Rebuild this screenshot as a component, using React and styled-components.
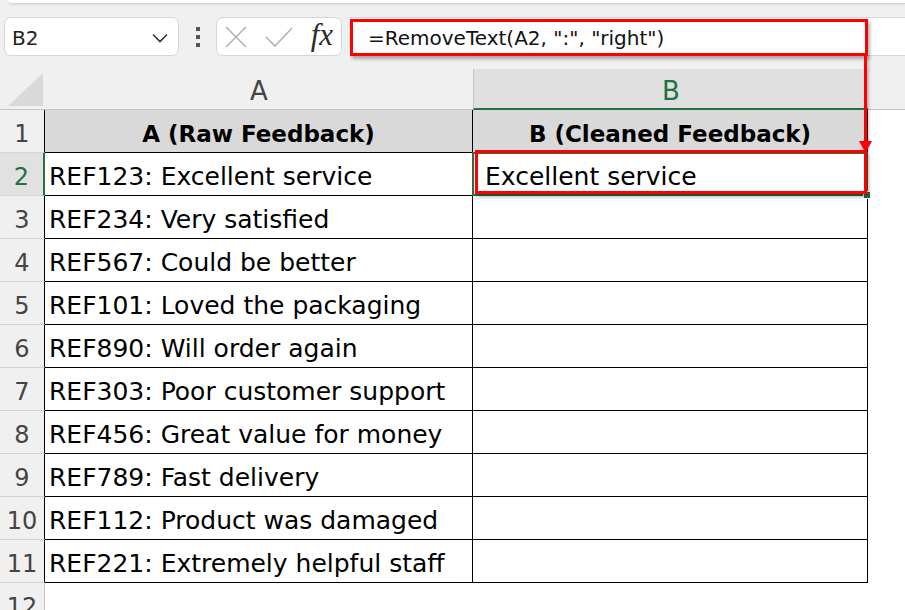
import React from "react";
import styled, { createGlobalStyle } from "styled-components";

const GlobalStyle = createGlobalStyle`
  html, body {
    margin: 0;
    padding: 0;
    background: #ffffff;
  }
  body {
    font-family: "DejaVu Sans", sans-serif;
    overflow: hidden;
  }
`;

const Page = styled.div`
  position: relative;
  width: 905px;
  height: 610px;
  overflow: hidden;
  background: #ffffff;
`;

const Toolbar = styled.div`
  background: #f0f0f0;
  height: 68px;
  display: flex;
  flex-direction: column;
`;

const RibbonEdge = styled.div`
  height: 3px;
  margin-left: 8px;
  background: #ffffff;
  border-bottom: 1px solid #d4d4d4;
  border-bottom-left-radius: 6px;
  box-shadow: 0 1px 3px rgba(0, 0, 0, 0.08);
`;

const FormulaRow = styled.div`
  display: flex;
  align-items: stretch;
  height: 39px;
  margin-top: 13px;
  padding-left: 4px;
`;

const NameBox = styled.div`
  width: 175px;
  box-sizing: border-box;
  background: #ffffff;
  border: 1px solid #d6d6d6;
  border-radius: 7px;
  display: flex;
  align-items: center;
  justify-content: space-between;
  padding: 2px 10px 0 7px;
  font-size: 20px;
  color: #222;
`;

const DotsSlot = styled.div`
  width: 37px;
  display: flex;
  align-items: center;
  justify-content: center;
`;

const FxBox = styled.div`
  width: 126px;
  box-sizing: border-box;
  background: #ffffff;
  border: 1px solid #d6d6d6;
  border-radius: 7px;
  display: flex;
  align-items: center;
  justify-content: space-between;
  padding: 0 8px;
`;

const FxLabel = styled.span`
  font-family: "Liberation Serif", "DejaVu Serif", serif;
  font-style: italic;
  font-size: 31px;
  color: #2a2a2a;
  line-height: 1;
  margin-top: -4px;
`;

const FormulaInput = styled.div`
  flex: 1;
  margin-left: 8px;
  background: #ffffff;
  border-top: 1px solid #d6d6d6;
  border-bottom: 1px solid #d6d6d6;
  display: flex;
  align-items: center;
  padding: 3px 0 0 18px;
  font-size: 20px;
  color: #111;
  white-space: nowrap;
`;

const gridCols = "45px 428px 395px 1fr";

const HeaderRow = styled.div`
  display: grid;
  grid-template-columns: ${gridCols};
  height: 42px;
  background: #f0f0f0;
`;

const Corner = styled.div`
  position: relative;
  border-bottom: 1px solid #c6c6c6;
  &::after {
    content: "";
    position: absolute;
    left: 8px;
    right: 2px;
    top: 5px;
    bottom: 3px;
    background: #d9d9d9;
    clip-path: polygon(100% 0, 100% 100%, 0 100%);
  }
`;

const ColHead = styled.div`
  box-sizing: border-box;
  display: flex;
  align-items: center;
  justify-content: center;
  padding-top: 4px;
  font-size: 26px;
  color: ${(p) => (p.$active ? "#217346" : "#444")};
  background: ${(p) => (p.$active ? "#e0e0e0" : "#f0f0f0")};
  border-left: ${(p) => (p.$active ? "1px solid #c6c6c6" : "none")};
  border-bottom: ${(p) => (p.$active ? "2px solid #217346" : "1px solid #c6c6c6")};
  margin-top: ${(p) => (p.$active ? "1px" : "0")};
`;

const RowLine = styled.div`
  display: grid;
  grid-template-columns: ${gridCols};
  height: 43px;
`;

const RowHead = styled.div`
  box-sizing: border-box;
  display: flex;
  align-items: center;
  justify-content: center;
  padding-top: 5px;
  font-size: 24px;
  background: ${(p) => (p.$active ? "#e1e1e1" : "#f0f0f0")};
  color: ${(p) => (p.$active ? "#217346" : "#444")};
  border-bottom: 1px solid #d4d4d4;
  border-right: ${(p) =>
    p.$active ? "2px solid #217346" : p.$inTable ? "1px solid #000" : "1px solid #c6c6c6"};
`;

const Cell = styled.div`
  box-sizing: border-box;
  display: flex;
  align-items: center;
  justify-content: ${(p) => (p.$head ? "center" : "flex-start")};
  padding: 5px ${(p) => p.$pad}px 0;
  font-size: ${(p) => (p.$head ? "23px" : "25px")};
  font-weight: ${(p) => (p.$head ? 700 : 400)};
  background: ${(p) => (p.$head ? "#d9d9d9" : "#ffffff")};
  color: #000;
  white-space: nowrap;
  overflow: hidden;
  border-right: 1px solid #000;
  border-bottom: 1px solid #000;
`;

const Filler = styled.div`
  background: #ffffff;
`;

const Selection = styled.div`
  position: absolute;
  left: 472px;
  top: 152px;
  width: 396px;
  height: 44px;
  box-sizing: border-box;
  border: 2px solid #2d6b45;
  &::after {
    content: "";
    position: absolute;
    right: -5px;
    bottom: -5px;
    width: 6px;
    height: 6px;
    background: #2d6b45;
    border: 1px solid #ffffff;
  }
`;

const RedBox = styled.div`
  position: absolute;
  box-sizing: border-box;
  border: 3px solid #ff0000;
  box-shadow: 2px 3px 3px rgba(0, 0, 0, 0.3);
  pointer-events: none;
`;

const RedLine = styled.div`
  position: absolute;
  left: 864px;
  top: 55px;
  width: 3px;
  height: 88px;
  background: #ff0000;
  box-shadow: 2px 2px 3px rgba(0, 0, 0, 0.25);
`;

const ArrowHead = styled.svg`
  position: absolute;
  left: 858px;
  top: 140px;
`;

const rows = [
  "REF123: Excellent service",
  "REF234: Very satisfied",
  "REF567: Could be better",
  "REF101: Loved the packaging",
  "REF890: Will order again",
  "REF303: Poor customer support",
  "REF456: Great value for money",
  "REF789: Fast delivery",
  "REF112: Product was damaged",
  "REF221: Extremely helpful staff",
];

const Dots = () => (
  <svg width="6" height="22" viewBox="0 0 6 22">
    <rect x="1" y="1" width="4" height="4" fill="#555" />
    <rect x="1" y="9" width="4" height="4" fill="#555" />
    <rect x="1" y="17" width="4" height="4" fill="#555" />
  </svg>
);

const Chevron = () => (
  <svg width="16" height="10" viewBox="0 0 16 10">
    <polyline points="1,1.5 8,8.5 15,1.5" fill="none" stroke="#333" strokeWidth="1.6" />
  </svg>
);

const CancelIcon = () => (
  <svg width="22" height="22" viewBox="0 0 22 22">
    <path d="M1 1 L21 21 M21 1 L1 21" stroke="#b3b3b3" strokeWidth="1.6" fill="none" />
  </svg>
);

const CheckIcon = () => (
  <svg width="28" height="22" viewBox="0 0 28 22">
    <polyline points="1,11 10,20 27,2" stroke="#b3b3b3" strokeWidth="1.6" fill="none" />
  </svg>
);

export default function App() {
  return (
    <Page>
      <GlobalStyle />
      <Toolbar>
        <RibbonEdge />
        <FormulaRow>
          <NameBox>
            <span>B2</span>
            <Chevron />
          </NameBox>
          <DotsSlot>
            <Dots />
          </DotsSlot>
          <FxBox>
            <CancelIcon />
            <CheckIcon />
            <FxLabel>fx</FxLabel>
          </FxBox>
          <FormulaInput>=RemoveText(A2, ":", "right")</FormulaInput>
        </FormulaRow>
      </Toolbar>

      <HeaderRow>
        <Corner />
        <ColHead>A</ColHead>
        <ColHead $active>B</ColHead>
        <ColHead />
      </HeaderRow>

      <RowLine>
        <RowHead $inTable>1</RowHead>
        <Cell $head $pad={4}>A (Raw Feedback)</Cell>
        <Cell $head $pad={4}>B (Cleaned Feedback)</Cell>
        <Filler />
      </RowLine>
      {rows.map((text, i) => (
        <RowLine key={text}>
          <RowHead $inTable $active={i === 0}>{i + 2}</RowHead>
          <Cell $pad={4}>{text}</Cell>
          <Cell $pad={12}>{i === 0 ? "Excellent service" : ""}</Cell>
          <Filler />
        </RowLine>
      ))}
      <RowLine>
        <RowHead>12</RowHead>
        <Filler />
        <Filler />
        <Filler />
      </RowLine>

      <Selection />
      <RedBox style={{ left: 350, top: 19, width: 518, height: 37 }} />
      <RedBox style={{ left: 475, top: 150, width: 392, height: 44 }} />
      <RedLine />
      <ArrowHead width="15" height="14" viewBox="0 0 15 14">
        <polygon points="1,1 14,1 7.5,13" fill="#ff0000" />
      </ArrowHead>
    </Page>
  );
}
